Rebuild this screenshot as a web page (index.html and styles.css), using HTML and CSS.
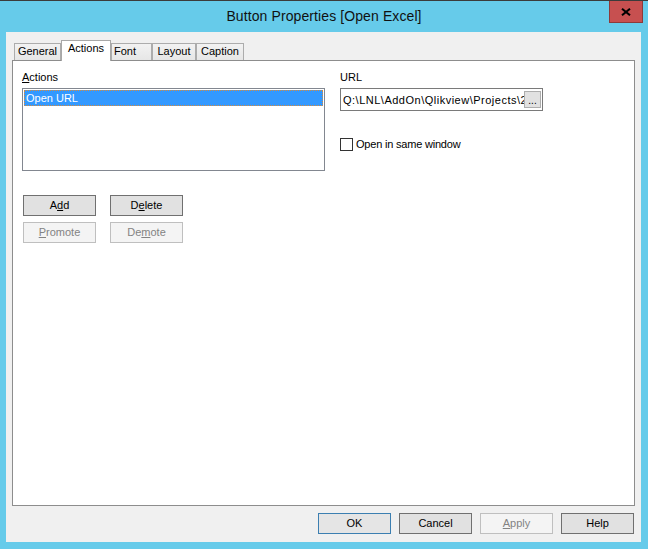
FILE: index.html
```html
<!DOCTYPE html>
<html>
<head>
<meta charset="utf-8">
<link rel="stylesheet" href="styles.css">
</head>
<body>
<div class="window">
  <div class="titlebar">
    <div class="tb-spacer"></div>
    <div class="title">Button Properties [Open Excel]</div>
    <div class="close">
      <svg width="10" height="8" viewBox="0 0 10 8"><path d="M1 0.8 L9 7.2 M9 0.8 L1 7.2" stroke="#000" stroke-width="2.1" fill="none"/></svg>
    </div>
  </div>
  <div class="client">
    <div class="tabs">
      <div class="tab w-general">General</div>
      <div class="tab active w-actions">Actions</div>
      <div class="tab w-font">Font</div>
      <div class="tab w-layout">Layout</div>
      <div class="tab w-caption">Caption</div>
    </div>
    <div class="panel">
      <div class="cols">
        <div class="col">
          <div class="label"><u>A</u>ctions</div>
          <div class="listbox">
            <div class="item selected">Open URL</div>
          </div>
          <div class="btnrow first">
            <div class="btn">A<u>d</u>d</div>
            <div class="btn">D<u>e</u>lete</div>
          </div>
          <div class="btnrow second">
            <div class="btn disabled"><u>P</u>romote</div>
            <div class="btn disabled">De<u>m</u>ote</div>
          </div>
        </div>
        <div class="col">
          <div class="label">URL</div>
          <div class="textbox">
            <span class="tb-text">Q:\LNL\AddOn\Qlikview\Projects\2</span>
            <span class="browse">...</span>
          </div>
          <div class="check">
            <span class="box"></span>
            <span class="check-label">Open in same window</span>
          </div>
        </div>
      </div>
    </div>
    <div class="footer">
      <div class="btn default">OK</div>
      <div class="btn">Cancel</div>
      <div class="btn disabled"><u>A</u>pply</div>
      <div class="btn">Help</div>
    </div>
  </div>
</div>
</body>
</html>
```
FILE: styles.css
```css
html, body {
  margin: 0;
  padding: 0;
}
body {
  width: 648px;
  height: 549px;
  overflow: hidden;
  background: #66cbea;
  font-family: "Liberation Sans", Arial, sans-serif;
  font-size: 11px;
  color: #000;
}
.window {
  box-sizing: border-box;
  height: 549px;
  display: flex;
  flex-direction: column;
  border-top: 1px solid #3b3b3b;
}
.titlebar {
  height: 31px;
  flex: none;
  display: grid;
  grid-template-columns: 1fr auto 1fr;
  align-items: start;
}
.title {
  font-size: 14px;
  line-height: 31px;
  color: #111;
  white-space: nowrap;
  letter-spacing: 0.1px;
}
.close {
  justify-self: end;
  margin-right: 5px;
  box-sizing: border-box;
  width: 34px;
  height: 22px;
  background: #c75050;
  border: 1px solid #8d3a3a;
  border-top: none;
  display: flex;
  align-items: center;
  justify-content: center;
}
.client {
  flex: 1;
  margin: 0 7px 7px 6px;
  background: #f0f0f0;
  padding: 8px 6px 8px 6px;
  display: flex;
  flex-direction: column;
  min-height: 0;
}
.tabs {
  display: flex;
  align-items: flex-end;
  height: 20px;
  padding-left: 2px;
  flex: none;
}
.tab {
  box-sizing: border-box;
  height: 17px;
  border: 1px solid #acacac;
  border-bottom: none;
  background: linear-gradient(#f2f2f2, #e6e6e6);
  text-align: center;
  line-height: 15px;
  white-space: nowrap;
}
.tab.active {
  height: 21px;
  margin-bottom: -1px;
  background: #fff;
  position: relative;
  z-index: 1;
  border-color: #a8a8a8;
}
.w-general { width: 47px; }
.w-actions { width: 50px; }
.w-font { width: 41px; text-align: left; padding-left: 2px; }
.w-layout { width: 44px; }
.w-caption { width: 48px; }
.panel {
  flex: 1;
  border: 1px solid #8d8d8d;
  background: #fff;
  padding: 8px 9px;
}
.cols {
  display: grid;
  grid-template-columns: 303px 203px;
  column-gap: 15px;
}
.label {
  line-height: 16px;
  margin-bottom: 3px;
}
.listbox {
  box-sizing: border-box;
  height: 83px;
  border: 1px solid #828790;
  padding: 1px;
}
.item {
  box-sizing: border-box;
  height: 16px;
  line-height: 14px;
  padding-left: 1px;
}
.item.selected {
  background: #3399ff;
  color: #fff;
  border: 1px dotted #d88a3c;
}
.btnrow {
  display: flex;
  gap: 14px;
  padding-left: 1px;
}
.btnrow.first { margin-top: 24px; }
.btnrow.second { margin-top: 6px; }
.btn {
  box-sizing: border-box;
  width: 73px;
  height: 21px;
  background: #e1e1e1;
  border: 1px solid #707070;
  text-align: center;
  line-height: 19px;
}
.btn.default {
  border-color: #3c7fb1;
  background: #e5e5e5;
}
.btn.disabled {
  background: #f4f4f4;
  border-color: #bfbfbf;
  color: #838383;
}
.textbox {
  box-sizing: border-box;
  height: 23px;
  border: 1px solid #7a7a7a;
  background: #fff;
  display: flex;
  align-items: center;
  padding-left: 2px;
  padding-right: 1px;
}
.tb-text {
  flex: 1;
  min-width: 0;
  overflow: hidden;
  white-space: nowrap;
  line-height: 16px;
  letter-spacing: 0.5px;
}
.browse {
  box-sizing: border-box;
  flex: none;
  width: 17px;
  height: 17px;
  background: #e1e1e1;
  border: 1px solid #adadad;
  text-align: center;
  line-height: 18px;
  font-size: 10px;
}
.check {
  display: flex;
  align-items: center;
  margin-top: 27px;
  gap: 3px;
}
.box {
  box-sizing: border-box;
  width: 13px;
  height: 13px;
  border: 1px solid #333;
  background: #fff;
}
.check-label {
  line-height: 13px;
  letter-spacing: -0.2px;
}
.footer {
  flex: none;
  display: flex;
  justify-content: flex-end;
  gap: 8px;
  margin-top: 7px;
  padding-right: 1px;
}
```
